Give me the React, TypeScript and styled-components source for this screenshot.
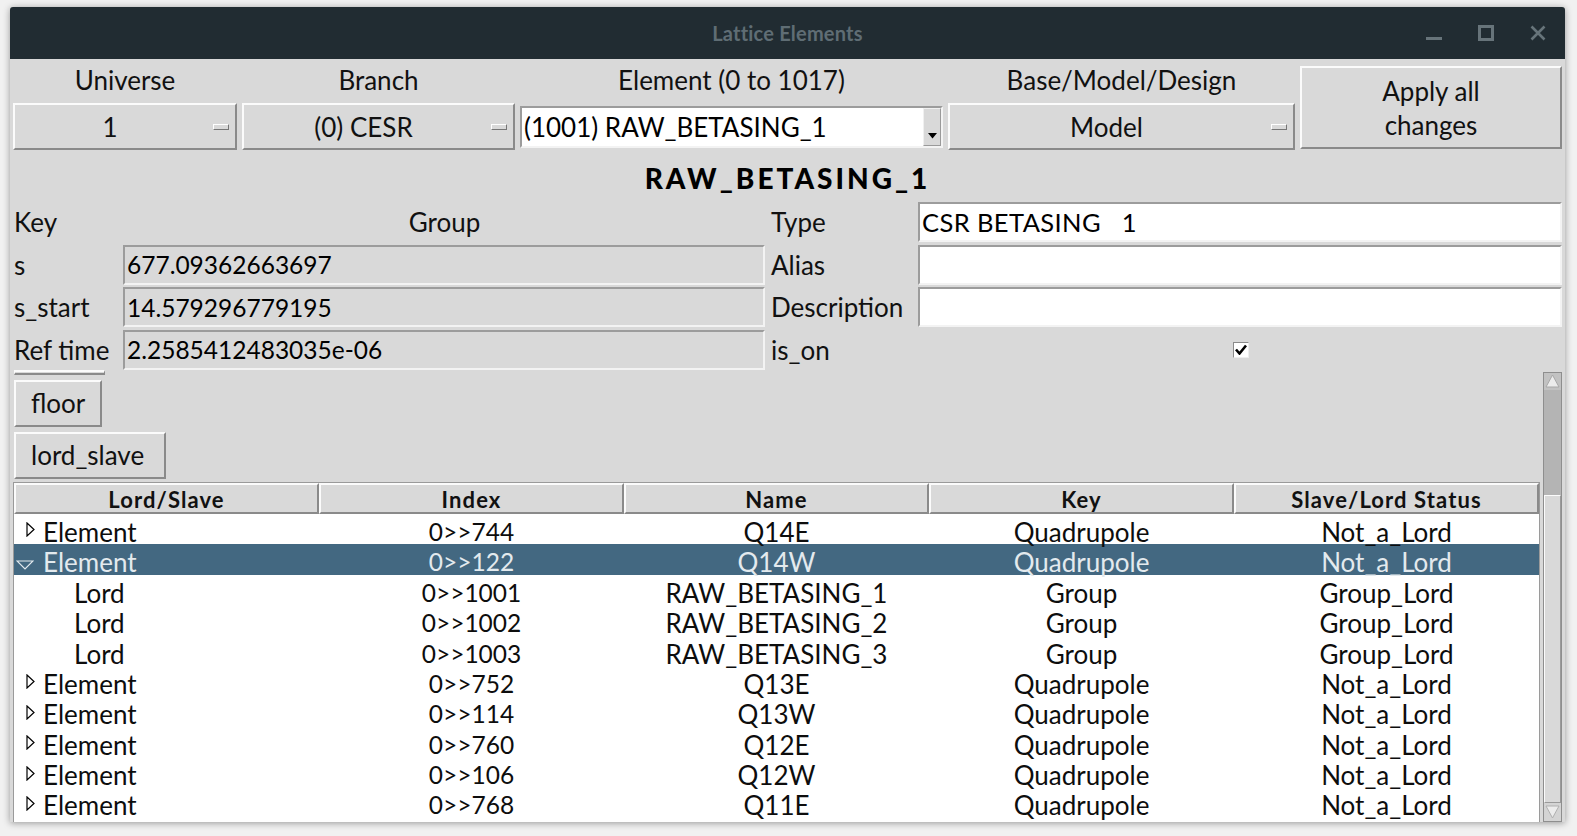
import React from 'react';
import styled, { createGlobalStyle } from 'styled-components';

const GlobalStyle = createGlobalStyle`
  html, body { margin: 0; padding: 0; background: #f1f1f1; }
  body { font-family: Lato, "Open Sans", sans-serif; color: #111; }
  * { box-sizing: border-box; }
`;

const Page = styled.div`
  width: 1577px;
  height: 836px;
  padding: 7px 12px 14px 10px;
  overflow: hidden;
`;

const Window = styled.div`
  width: 1555px;
  height: 815px;
  background: #d9d9d9;
  display: flex;
  flex-direction: column;
  box-shadow: 0 1px 7px rgba(0, 0, 0, 0.38);
  border-radius: 3px 3px 0 0;
  overflow: hidden;
`;

const TitleBar = styled.div`
  height: 52px;
  flex: none;
  background: #212c32;
  display: grid;
  grid-template-columns: 1fr auto 1fr;
  align-items: center;
`;

const TitleText = styled.div`
  grid-column: 2;
  color: #5f6d74;
  font-size: 20px;
  font-weight: 700;
  letter-spacing: 0.2px;
`;

const WinControls = styled.div`
  grid-column: 3;
  justify-self: end;
  display: flex;
  align-items: center;
  gap: 36px;
  padding-right: 19px;
`;

const Body = styled.div`
  flex: 1;
  min-height: 0;
  display: flex;
  flex-direction: column;
  padding: 0 3px 0 3px;
`;

const TopGrid = styled.div`
  display: grid;
  grid-template-columns: 224px 273px 423px 347px 262px;
  grid-template-rows: 44px 47px;
  column-gap: 5px;
`;

const ColLabel = styled.div`
  display: flex;
  align-items: center;
  justify-content: center;
  font-size: 26px;
  padding-bottom: 3px;
`;

const raised = `
  border: 2px solid;
  border-color: #fbfbfb #8a8a8a #8a8a8a #fbfbfb;
  background: #d9d9d9;
`;

const sunken = `
  border: 2px solid;
  border-color: #9c9c9c #f3f3f3 #f3f3f3 #9c9c9c;
`;

const Menubutton = styled.div`
  ${raised}
  display: flex;
  align-items: center;
  height: 47px;
  font-size: 26px;
`;

const MenuText = styled.span`
  flex: 1;
  text-align: center;
`;

const Indicator = styled.span`
  width: 16px;
  height: 6px;
  border: 1px solid;
  border-color: #ffffff #767676 #767676 #ffffff;
  margin: 0 6px 0 8px;
  flex: none;
`;

const ComboEntry = styled.div`
  ${sunken}
  align-self: center;
  height: 42px;
  background: #ffffff;
  display: flex;
  align-items: stretch;
  font-size: 26px;
`;

const ComboText = styled.span`
  flex: 1;
  padding-left: 2px;
  display: flex;
  align-items: center;
  color: #000;
`;

const ArrowButton = styled.span`
  width: 18px;
  flex: none;
  background: #d9d9d9;
  border: 1px solid;
  border-color: #f0f0f0 #9a9a9a #9a9a9a #f0f0f0;
  display: flex;
  align-items: flex-end;
  justify-content: center;
  padding-bottom: 6px;
`;

const ApplyButton = styled.div`
  ${raised}
  grid-column: 5;
  grid-row: 1 / span 2;
  margin: 7px 0 1px 0;
  display: flex;
  align-items: center;
  justify-content: center;
  text-align: center;
  font-size: 26px;
  line-height: 34px;
`;

const ElementTitle = styled.div`
  height: 52px;
  display: flex;
  align-items: center;
  justify-content: center;
  font-size: 28px;
  font-weight: 900;
  letter-spacing: 3px;
  padding-top: 3px;
  color: #000;
`;

const FormGrid = styled.div`
  display: grid;
  grid-template-columns: 110px 642px 153px 644px;
  grid-auto-rows: 40px;
  row-gap: 2.67px;
`;

const FieldLabel = styled.div<{ $center?: boolean; $indent?: number }>`
  display: flex;
  align-items: center;
  justify-content: ${(p) => (p.$center ? 'center' : 'flex-start')};
  padding-left: ${(p) => p.$indent ?? 1}px;
  font-size: 26px;
  white-space: nowrap;
`;

const Entry = styled.div<{ $white?: boolean }>`
  ${sunken}
  background: ${(p) => (p.$white ? '#ffffff' : '#d9d9d9')};
  display: flex;
  align-items: center;
  padding-left: 2px;
  font-size: 24.5px;
  color: #000;
  white-space: pre;
`;

const TypeText = styled.span`
  font-size: 25.5px;
  letter-spacing: 0.4px;
`;

const CheckCell = styled.div`
  display: flex;
  align-items: center;
  justify-content: center;
  padding-left: 2px;
`;

const CheckBox = styled.span`
  width: 16px;
  height: 16px;
  background: #fff;
  border: 1px solid;
  border-color: #8a8a8a #eeeeee #eeeeee #8a8a8a;
  display: flex;
  align-items: center;
  justify-content: center;
`;

const Lower = styled.div`
  flex: 1;
  min-height: 0;
  display: flex;
  gap: 3px;
`;

const LeftColumn = styled.div`
  flex: 1;
  min-width: 0;
  display: flex;
  flex-direction: column;
  align-items: flex-start;
`;

const Stub = styled.div`
  width: 91px;
  height: 5px;
  margin-left: 1px;
  border-bottom: 2px solid #8a8a8a;
  border-top: 2px solid #fbfbfb;
  border-left: 1px solid #fbfbfb;
  border-right: 1px solid #8a8a8a;
`;

const PlainButton = styled.div<{ $w: number }>`
  ${raised}
  width: ${(p) => p.$w}px;
  height: 47px;
  margin: 5px 0 0 1px;
  display: flex;
  align-items: center;
  padding-left: 15px;
  font-size: 26px;
`;

const Tree = styled.div`
  margin-top: 3px;
  align-self: stretch;
  flex: 1;
  min-height: 0;
  overflow: hidden;
  background: #ffffff;
  border: 1px solid #9a9a9a;
  border-bottom: none;
`;

const HeaderRow = styled.div`
  display: grid;
  grid-template-columns: repeat(5, 1fr);
  background: #d9d9d9;
`;

const HeaderCell = styled.div`
  ${raised}
  height: 31px;
  display: flex;
  align-items: center;
  justify-content: center;
  font-size: 22px;
  font-weight: 700;
  letter-spacing: 1.1px;
  color: #111;
  padding-top: 2px;
`;

const Row = styled.div<{ $sel?: boolean }>`
  display: grid;
  grid-template-columns: repeat(5, 1fr);
  height: 30.4px;
  background: ${(p) => (p.$sel ? '#436881' : '#ffffff')};
  color: ${(p) => (p.$sel ? '#e3eaee' : '#0d0d0d')};
  font-size: 26px;
`;

const Cell = styled.div<{ $digits?: boolean }>`
  display: flex;
  align-items: center;
  justify-content: center;
  padding-top: 4px;
  white-space: nowrap;
  line-height: 28px;
  font-size: ${(p) => (p.$digits ? '24.5px' : 'inherit')};
`;

const FirstCell = styled.div<{ $level: number }>`
  display: flex;
  align-items: center;
  padding-top: 4px;
  padding-left: ${(p) => (p.$level === 1 ? 60 : 0)}px;
  line-height: 28px;
  white-space: nowrap;
`;

const Toggle = styled.span<{ $open?: boolean }>`
  width: 29px;
  flex: none;
  display: flex;
  align-self: stretch;
  align-items: center;
  padding-left: ${(p) => (p.$open ? 2 : 12)}px;
  padding-top: ${(p) => (p.$open ? 10 : 0)}px;
  margin-top: -4px;
`;

const ScrollBar = styled.div`
  width: 19px;
  margin-top: 2px;
  flex: none;
  display: flex;
  flex-direction: column;
  border: 1px solid #8e8e8e;
  background: #b5b5b5;
`;

const ScrollArrow = styled.div<{ $h: number; $bg: string }>`
  height: ${(p) => p.$h}px;
  flex: none;
  background: ${(p) => p.$bg};
  display: flex;
  align-items: center;
  justify-content: center;
`;

const ScrollTrough = styled.div<{ $h: number }>`
  height: ${(p) => p.$h}px;
  flex: none;
  background: #b4b4b4;
`;

const ScrollThumb = styled.div`
  flex: 1;
  background: #d9d9d9;
  border: 1px solid;
  border-color: #fbfbfb #9a9a9a #9a9a9a #fbfbfb;
`;

type TreeRow = {
  kind: string;
  level: number;
  open?: boolean;
  index: string;
  name: string;
  key: string;
  status: string;
  sel?: boolean;
};

const rows: TreeRow[] = [
  { kind: 'Element', level: 0, index: '0>>744', name: 'Q14E', key: 'Quadrupole', status: 'Not_a_Lord' },
  { kind: 'Element', level: 0, open: true, sel: true, index: '0>>122', name: 'Q14W', key: 'Quadrupole', status: 'Not_a_Lord' },
  { kind: 'Lord', level: 1, index: '0>>1001', name: 'RAW_BETASING_1', key: 'Group', status: 'Group_Lord' },
  { kind: 'Lord', level: 1, index: '0>>1002', name: 'RAW_BETASING_2', key: 'Group', status: 'Group_Lord' },
  { kind: 'Lord', level: 1, index: '0>>1003', name: 'RAW_BETASING_3', key: 'Group', status: 'Group_Lord' },
  { kind: 'Element', level: 0, index: '0>>752', name: 'Q13E', key: 'Quadrupole', status: 'Not_a_Lord' },
  { kind: 'Element', level: 0, index: '0>>114', name: 'Q13W', key: 'Quadrupole', status: 'Not_a_Lord' },
  { kind: 'Element', level: 0, index: '0>>760', name: 'Q12E', key: 'Quadrupole', status: 'Not_a_Lord' },
  { kind: 'Element', level: 0, index: '0>>106', name: 'Q12W', key: 'Quadrupole', status: 'Not_a_Lord' },
  { kind: 'Element', level: 0, index: '0>>768', name: 'Q11E', key: 'Quadrupole', status: 'Not_a_Lord' },
];

const ClosedTri = () => (
  <svg width="9" height="15" viewBox="0 0 9 15">
    <polygon points="1,1 8,7.5 1,14" fill="none" stroke="#000" strokeWidth="1.2" />
  </svg>
);

const OpenTri = () => (
  <svg width="18" height="10" viewBox="0 0 18 10">
    <polygon points="1,1 17,1 9,9" fill="none" stroke="#e3eaee" strokeWidth="1.2" />
  </svg>
);

export default function App() {
  return (
    <>
      <GlobalStyle />
      <Page>
        <Window>
          <TitleBar>
            <TitleText>Lattice Elements</TitleText>
            <WinControls>
              <svg width="16" height="16" viewBox="0 0 16 16">
                <rect x="0" y="12" width="16" height="3" fill="#67747a" />
              </svg>
              <svg width="16" height="16" viewBox="0 0 16 16">
                <rect x="1.5" y="1.5" width="13" height="13" fill="none" stroke="#67747a" strokeWidth="3" />
              </svg>
              <svg width="16" height="16" viewBox="0 0 16 16">
                <path d="M1.5 1.5 L14.5 14.5 M14.5 1.5 L1.5 14.5" stroke="#67747a" strokeWidth="2.6" />
              </svg>
            </WinControls>
          </TitleBar>
          <Body>
            <TopGrid>
              <ColLabel>Universe</ColLabel>
              <ColLabel>Branch</ColLabel>
              <ColLabel>Element (0 to 1017)</ColLabel>
              <ColLabel>Base/Model/Design</ColLabel>
              <ApplyButton>
                Apply all
                <br />
                changes
              </ApplyButton>
              <Menubutton>
                <MenuText>1</MenuText>
                <Indicator />
              </Menubutton>
              <Menubutton>
                <MenuText>(0) CESR</MenuText>
                <Indicator />
              </Menubutton>
              <ComboEntry>
                <ComboText>(1001) RAW_BETASING_1</ComboText>
                <ArrowButton>
                  <svg width="9" height="6" viewBox="0 0 9 6">
                    <polygon points="0,0 9,0 4.5,5.5" fill="#000" />
                  </svg>
                </ArrowButton>
              </ComboEntry>
              <Menubutton>
                <MenuText>Model</MenuText>
                <Indicator />
              </Menubutton>
            </TopGrid>

            <ElementTitle>RAW_BETASING_1</ElementTitle>

            <FormGrid>
              <FieldLabel>Key</FieldLabel>
              <FieldLabel $center>Group</FieldLabel>
              <FieldLabel $indent={6}>Type</FieldLabel>
              <Entry $white>
                <TypeText>{'CSR BETASING   1'}</TypeText>
              </Entry>

              <FieldLabel>s</FieldLabel>
              <Entry>677.09362663697</Entry>
              <FieldLabel $indent={6}>Alias</FieldLabel>
              <Entry $white />

              <FieldLabel>s_start</FieldLabel>
              <Entry>14.579296779195</Entry>
              <FieldLabel $indent={6}>Description</FieldLabel>
              <Entry $white />

              <FieldLabel>Ref time</FieldLabel>
              <Entry>2.2585412483035e-06</Entry>
              <FieldLabel $indent={6}>is_on</FieldLabel>
              <CheckCell>
                <CheckBox>
                  <svg width="12" height="11" viewBox="0 0 12 11">
                    <path d="M1 5.5 L4.5 9.5 L11 1.5" fill="none" stroke="#000" strokeWidth="2.6" />
                  </svg>
                </CheckBox>
              </CheckCell>
            </FormGrid>

            <Lower>
              <LeftColumn>
                <Stub />
                <PlainButton $w={88}>floor</PlainButton>
                <PlainButton $w={152}>lord_slave</PlainButton>
                <Tree>
                  <HeaderRow>
                    <HeaderCell>Lord/Slave</HeaderCell>
                    <HeaderCell>Index</HeaderCell>
                    <HeaderCell>Name</HeaderCell>
                    <HeaderCell>Key</HeaderCell>
                    <HeaderCell>Slave/Lord Status</HeaderCell>
                  </HeaderRow>
                  {rows.map((r, i) => (
                    <Row key={i} $sel={r.sel}>
                      <FirstCell $level={r.level}>
                        {r.level === 0 && (
                          <Toggle $open={r.open}>{r.open ? <OpenTri /> : <ClosedTri />}</Toggle>
                        )}
                        {r.kind}
                      </FirstCell>
                      <Cell $digits>{r.index}</Cell>
                      <Cell>{r.name}</Cell>
                      <Cell>{r.key}</Cell>
                      <Cell>{r.status}</Cell>
                    </Row>
                  ))}
                </Tree>
              </LeftColumn>
              <ScrollBar>
                <ScrollArrow $h={17} $bg="#c2c2c2">
                  <svg width="15" height="14" viewBox="0 0 15 14">
                    <polygon points="7.5,1 14,13 1,13" fill="#ececec" stroke="#a8a8a8" strokeWidth="1" />
                  </svg>
                </ScrollArrow>
                <ScrollTrough $h={105} />
                <ScrollThumb />
                <ScrollArrow $h={18} $bg="#d4d4d4">
                  <svg width="15" height="14" viewBox="0 0 15 14">
                    <polygon points="1,1 14,1 7.5,13" fill="#ececec" stroke="#b0b0b0" strokeWidth="1" />
                  </svg>
                </ScrollArrow>
              </ScrollBar>
            </Lower>
          </Body>
        </Window>
      </Page>
    </>
  );
}
